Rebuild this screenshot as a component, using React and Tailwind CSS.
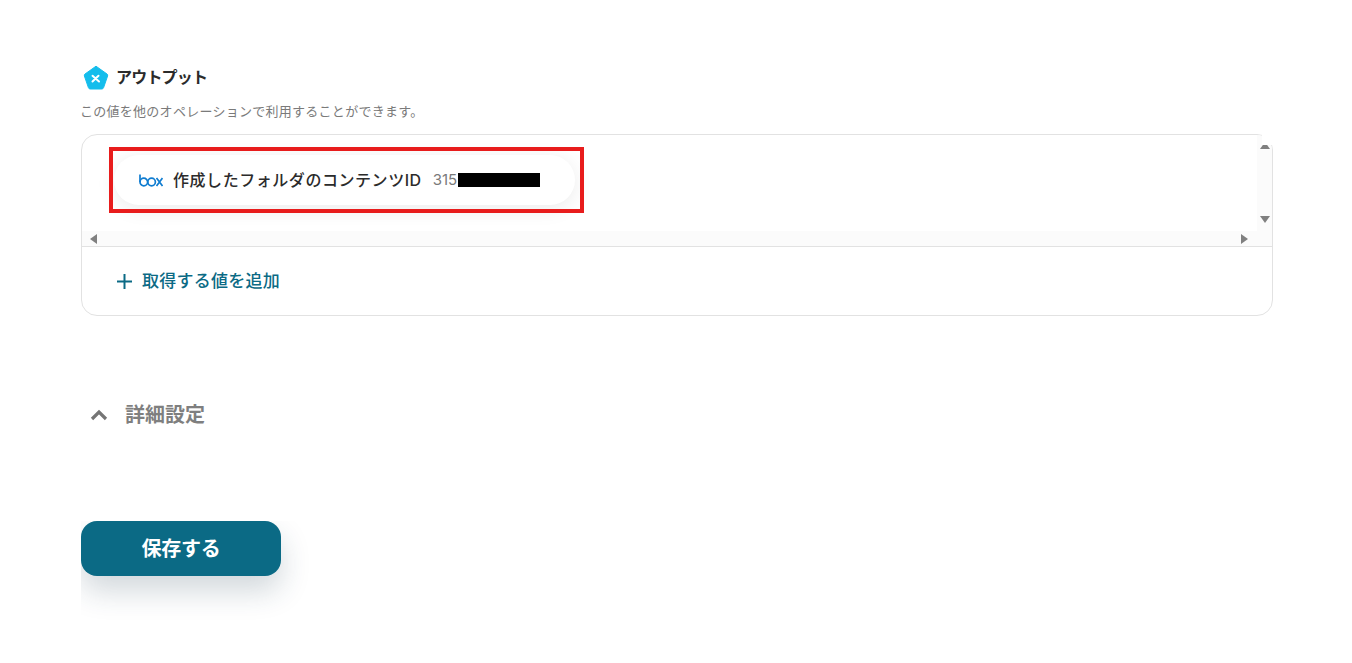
import React from 'react';

const font = { fontFamily: '"Inter", "Noto Sans CJK JP", sans-serif' };

const YoomIcon = () => (
  <svg width="26" height="26" viewBox="0 0 26 26">
    <path d="M13 1.2 L24 9 Q25 9.8 24.6 11 L20.6 22.6 Q20.2 24 18.8 24 H7.2 Q5.8 24 5.4 22.6 L1.4 11 Q1 9.8 2 9 Z" fill="#14bdec" stroke="#14bdec" strokeWidth="1" strokeLinejoin="round" />
    <path d="M9.5 10.8 L16 16.5 M15.5 10.8 L9.5 16.5" stroke="#fff" strokeWidth="2" strokeLinecap="round" />
  </svg>
);

const BoxLogo = () => (
  <svg width="24" height="13" viewBox="0 0 24 13" fill="none" stroke="#0f7cd0" strokeWidth="1.7">
    <path d="M1 0.5 V8" />
    <circle cx="4.8" cy="8" r="3.8" />
    <circle cx="12.6" cy="8" r="3.8" />
    <path d="M17.5 4 L23.5 12 M23.5 4 L17.5 12" />
  </svg>
);

const Arrow = ({ dir }) => {
  const points = {
    up: '0,8 5,1 10,8',
    down: '0,2 10,2 5,9',
    left: '8,0 8,10 1,5',
    right: '2,0 2,10 9,5',
  };
  return (
    <svg width="10" height="10" viewBox="0 0 10 10">
      <polygon points={points[dir]} fill="#808080" />
    </svg>
  );
};

const App = () => {
  return (
    <div className="min-h-[663px] bg-white pl-[81px] pr-[79px] pt-[65px] overflow-hidden" style={font}>
      {/* Output header */}
      <div className="flex items-center gap-[7px] pl-[2px] h-[26px]">
        <YoomIcon />
        <h2 className="text-[16px] font-bold text-[#2b2b2b] tracking-[-0.8px] -mt-[2px]">アウトプット</h2>
      </div>
      <p className="mt-[11px] text-[13px] leading-[20px] text-[#7a7a7a] -ml-[1px] -translate-y-[1px] tracking-[0.27px]">
        この値を他のオペレーションで利用することができます。
      </p>

      {/* Output card */}
      <div className="relative mt-[12px]">
        <div className="h-[182px] border border-[#e2e2e2] rounded-[16px] overflow-hidden flex flex-col">
          <div className="h-[112px] flex flex-col border-b border-[#e2e2e2]">
            <div className="h-[96px] flex">
              <div className="flex-1 pt-[20px] pl-[32px]">
                <div className="relative w-[461px] h-[50px] rounded-full bg-white shadow-[0_4px_20px_rgba(0,0,0,0.08)] flex items-center pl-[25px]">
                  <BoxLogo />
                  <span className="ml-[10px] text-[16px] font-medium text-[#2b2b2b] whitespace-nowrap tracking-[0.55px]">作成したフォルダのコンテンツID</span>
                  <span className="ml-[11px] text-[15px] text-[#7a7a7a]">315</span>
                  <span className="w-[82px] h-[14px] bg-black ml-[1px]" />
                  {/* annotation over the pill */}
                  <div className="absolute -left-[5px] -top-[8px] w-[475px] h-[66px] border-[4px] border-[#e81c1c]" />
                </div>
              </div>
              <div className="w-[15px] bg-[#fbfbfb] flex flex-col items-center justify-between pt-[6px] pb-[7px]">
                <Arrow dir="up" />
                <Arrow dir="down" />
              </div>
            </div>
            <div className="h-[15px] bg-[#fbfbfb] flex items-center justify-between pl-[7px] pr-[23px]">
              <Arrow dir="left" />
              <Arrow dir="right" />
            </div>
          </div>
          <div className="flex-1 flex items-center pl-[34px]">
            <svg width="17" height="17" viewBox="0 0 17 17" stroke="#0b6a85" strokeWidth="2">
              <path d="M8.5 1 V16 M1 8.5 H16" />
            </svg>
            <span className="ml-[9px] mt-[2px] text-[17px] font-medium text-[#0b6a85] tracking-[0.25px]">取得する値を追加</span>
          </div>
        </div>
        {/* scrollbar sits over the rounded corner */}
        <div className="absolute right-0 top-0 w-[11px] h-[11px] bg-white" />
      </div>

      {/* Advanced settings */}
      <div className="mt-[84px] flex items-center h-[30px] pl-[9px]">
        <svg width="18" height="12" viewBox="0 0 18 12" fill="none" stroke="#757575" strokeWidth="3.2">
          <path d="M2 10 L9 3 L16 10" />
        </svg>
        <span className="ml-[17px] text-[20px] font-bold text-[#7f7f7f]">詳細設定</span>
      </div>

      {/* Save, shadow is cut off at the wrapper edge */}
      <div className="mt-[91px] w-[240px] h-[115px] overflow-hidden">
        <button className="w-[200px] h-[55px] rounded-[16px] bg-[#0b6a85] text-white text-[20px] font-bold tracking-[-0.2px] shadow-[0_15px_30px_rgba(30,60,80,0.2)]">
          保存する
        </button>
      </div>
    </div>
  );
};

export default App;
